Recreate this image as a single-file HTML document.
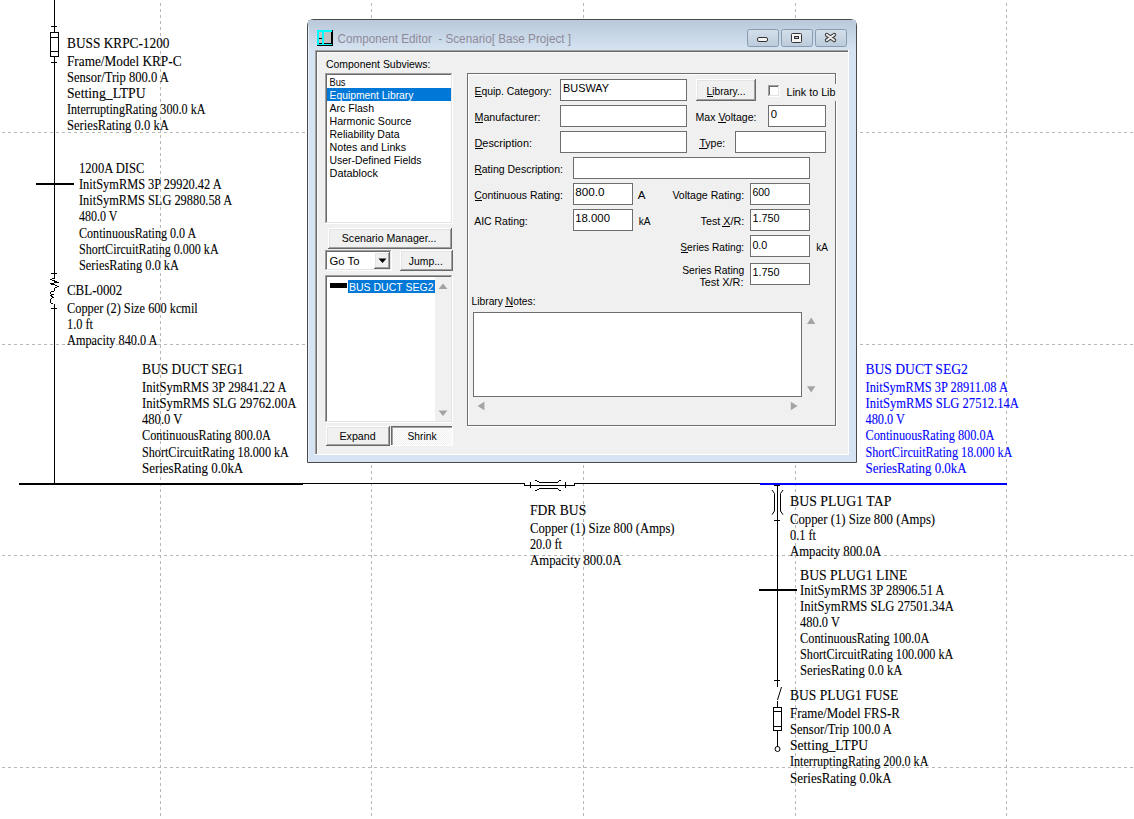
<!DOCTYPE html><html><head><meta charset="utf-8"><style>html,body{margin:0;padding:0;background:#fff;overflow:hidden}svg{position:absolute;left:0;top:0;display:block}</style></head><body>
<svg width="1134" height="819" viewBox="0 0 1134 819">
<rect width="1134" height="819" fill="#fff"/>
<g stroke="#b8b8b8" stroke-width="1" stroke-dasharray="3 3" shape-rendering="crispEdges">
<line x1="2" y1="132.5" x2="1134" y2="132.5"/>
<line x1="2" y1="344.5" x2="1134" y2="344.5"/>
<line x1="2" y1="555.5" x2="1134" y2="555.5"/>
<line x1="2" y1="767.5" x2="1134" y2="767.5"/>
<line x1="160.5" y1="3" x2="160.5" y2="819"/>
<line x1="371.5" y1="3" x2="371.5" y2="819"/>
<line x1="583.5" y1="3" x2="583.5" y2="819"/>
<line x1="795.5" y1="3" x2="795.5" y2="819"/>
<line x1="1006.5" y1="3" x2="1006.5" y2="819"/>
</g>
<g shape-rendering="crispEdges">
<rect x="54" y="0" width="1" height="33" fill="#000"/>
<rect x="50" y="32" width="9" height="1" fill="#000"/>
<rect x="50" y="56" width="9" height="1" fill="#000"/>
<rect x="50" y="32" width="1" height="25" fill="#000"/>
<rect x="58" y="32" width="1" height="25" fill="#000"/>
<rect x="50" y="37" width="9" height="1" fill="#000"/>
<rect x="50" y="51" width="9" height="1" fill="#000"/>
<rect x="51" y="26" width="6" height="1" fill="#000"/>
<rect x="54" y="56" width="1" height="218" fill="#000"/>
<rect x="51" y="62" width="6" height="1" fill="#000"/>
<rect x="36" y="183" width="38" height="2" fill="#000"/>
<rect x="51" y="273" width="6" height="1" fill="#000"/>
<rect x="51" y="308" width="6" height="1" fill="#000"/>
<rect x="54" y="273" width="1" height="6" fill="#000"/>
<rect x="54" y="304" width="1" height="181" fill="#000"/>
<rect x="52" y="278" width="3" height="1" fill="#000"/>
<rect x="50" y="279" width="2" height="1" fill="#000"/>
<rect x="52" y="280" width="3" height="1" fill="#000"/>
<rect x="54" y="281" width="3" height="1" fill="#000"/>
<rect x="54" y="282" width="5" height="1" fill="#000"/>
<rect x="50" y="283" width="4" height="1" fill="#000"/>
<rect x="51" y="284" width="4" height="1" fill="#000"/>
<rect x="55" y="285" width="2" height="1" fill="#000"/>
<rect x="57" y="286" width="2" height="1" fill="#000"/>
<rect x="55" y="287" width="2" height="1" fill="#000"/>
<rect x="54" y="288" width="1" height="1" fill="#000"/>
<rect x="54" y="289" width="1" height="1" fill="#000"/>
<rect x="54" y="290" width="1" height="1" fill="#000"/>
<rect x="51" y="291" width="3" height="1" fill="#000"/>
<rect x="50" y="292" width="1" height="1" fill="#000"/>
<rect x="50" y="293" width="1" height="1" fill="#000"/>
<rect x="51" y="294" width="3" height="1" fill="#000"/>
<rect x="50" y="295" width="2" height="1" fill="#000"/>
<rect x="51" y="296" width="2" height="1" fill="#000"/>
<rect x="52" y="297" width="2" height="1" fill="#000"/>
<rect x="51" y="298" width="1" height="1" fill="#000"/>
<rect x="50" y="299" width="1" height="1" fill="#000"/>
<rect x="50" y="300" width="1" height="1" fill="#000"/>
<rect x="50" y="301" width="1" height="1" fill="#000"/>
<rect x="50" y="302" width="1" height="1" fill="#000"/>
<rect x="51" y="303" width="2" height="1" fill="#000"/>
<rect x="19" y="483" width="284" height="2" fill="#000"/>
<rect x="302" y="483" width="223" height="1" fill="#000"/>
<rect x="524" y="483" width="1" height="3" fill="#000"/>
<rect x="524" y="485" width="51" height="1" fill="#000"/>
<rect x="574" y="483" width="1" height="3" fill="#000"/>
<rect x="574" y="483" width="187" height="1" fill="#000"/>
<rect x="530" y="482" width="1" height="1" fill="#000"/>
<rect x="530" y="482" width="1" height="6" fill="#000"/>
<rect x="565" y="482" width="1" height="6" fill="#000"/>
<rect x="539" y="482" width="19" height="1" fill="#000"/>
<rect x="539" y="488" width="19" height="1" fill="#000"/>
<rect x="537" y="481" width="2" height="1" fill="#000"/>
<rect x="535" y="480" width="2" height="1" fill="#000"/>
<rect x="558" y="481" width="1" height="1" fill="#000"/>
<rect x="559" y="480" width="2" height="1" fill="#000"/>
<rect x="537" y="489" width="2" height="1" fill="#000"/>
<rect x="535" y="490" width="2" height="1" fill="#000"/>
<rect x="558" y="489" width="1" height="1" fill="#000"/>
<rect x="559" y="490" width="2" height="1" fill="#000"/>
<rect x="760" y="483" width="247" height="2" fill="#0000ff"/>
<rect x="774" y="485" width="6" height="1" fill="#000"/>
<rect x="777" y="485" width="1" height="202" fill="#000"/>
<rect x="774" y="520" width="6" height="1" fill="#000"/>
<rect x="759" y="589" width="38" height="2" fill="#000"/>
<rect x="774" y="680" width="6" height="1" fill="#000"/>
</g>
<g fill="none" stroke="#000" stroke-width="1">
<polyline points="772,490 774.5,493.5 774.5,511 772,514.7"/>
<polyline points="783,490 780.5,493.5 780.5,511 783,514.7"/>
<line x1="777.5" y1="700" x2="781.5" y2="687"/>
<circle cx="777.5" cy="749" r="2.5"/>
</g>
<g shape-rendering="crispEdges">
<rect x="777" y="701" width="1" height="7" fill="#000"/>
<rect x="773" y="707" width="9" height="1" fill="#000"/>
<rect x="773" y="730" width="9" height="1" fill="#000"/>
<rect x="773" y="707" width="1" height="24" fill="#000"/>
<rect x="781" y="707" width="1" height="24" fill="#000"/>
<rect x="773" y="711" width="9" height="1" fill="#000"/>
<rect x="773" y="726" width="9" height="1" fill="#000"/>
<rect x="777" y="730" width="1" height="17" fill="#000"/>
</g>
<text x="67" y="48" font-family="Liberation Serif" font-size="13.8" fill="#000" stroke="#000" stroke-width="0.1" textLength="102.5" lengthAdjust="spacingAndGlyphs">BUSS KRPC-1200</text>
<text x="67" y="66" font-family="Liberation Serif" font-size="13.8" fill="#000" stroke="#000" stroke-width="0.1" textLength="114.5" lengthAdjust="spacingAndGlyphs">Frame/Model KRP-C</text>
<text x="67" y="82" font-family="Liberation Serif" font-size="13.8" fill="#000" stroke="#000" stroke-width="0.1" textLength="101.8" lengthAdjust="spacingAndGlyphs">Sensor/Trip 800.0 A</text>
<text x="67" y="98" font-family="Liberation Serif" font-size="13.8" fill="#000" stroke="#000" stroke-width="0.1" textLength="78.6" lengthAdjust="spacingAndGlyphs">Setting_LTPU</text>
<text x="67" y="114" font-family="Liberation Serif" font-size="13.8" fill="#000" stroke="#000" stroke-width="0.1" textLength="138.5" lengthAdjust="spacingAndGlyphs">InterruptingRating 300.0 kA</text>
<text x="67" y="130" font-family="Liberation Serif" font-size="13.8" fill="#000" stroke="#000" stroke-width="0.1" textLength="101.8" lengthAdjust="spacingAndGlyphs">SeriesRating 0.0 kA</text>
<text x="79" y="173" font-family="Liberation Serif" font-size="13.8" fill="#000" stroke="#000" stroke-width="0.1" textLength="65.4" lengthAdjust="spacingAndGlyphs">1200A DISC</text>
<text x="79" y="189" font-family="Liberation Serif" font-size="13.8" fill="#000" stroke="#000" stroke-width="0.1" textLength="142.6" lengthAdjust="spacingAndGlyphs">InitSymRMS 3P 29920.42 A</text>
<text x="79" y="205" font-family="Liberation Serif" font-size="13.8" fill="#000" stroke="#000" stroke-width="0.1" textLength="153.1" lengthAdjust="spacingAndGlyphs">InitSymRMS SLG 29880.58 A</text>
<text x="79" y="221" font-family="Liberation Serif" font-size="13.8" fill="#000" stroke="#000" stroke-width="0.1" textLength="38.4" lengthAdjust="spacingAndGlyphs">480.0 V</text>
<text x="79" y="238" font-family="Liberation Serif" font-size="13.8" fill="#000" stroke="#000" stroke-width="0.1" textLength="117.2" lengthAdjust="spacingAndGlyphs">ContinuousRating 0.0 A</text>
<text x="79" y="254" font-family="Liberation Serif" font-size="13.8" fill="#000" stroke="#000" stroke-width="0.1" textLength="139.6" lengthAdjust="spacingAndGlyphs">ShortCircuitRating 0.000 kA</text>
<text x="79" y="270" font-family="Liberation Serif" font-size="13.8" fill="#000" stroke="#000" stroke-width="0.1" textLength="99.9" lengthAdjust="spacingAndGlyphs">SeriesRating 0.0 kA</text>
<text x="67" y="295" font-family="Liberation Serif" font-size="13.8" fill="#000" stroke="#000" stroke-width="0.1" textLength="55.3" lengthAdjust="spacingAndGlyphs">CBL-0002</text>
<text x="67" y="313" font-family="Liberation Serif" font-size="13.8" fill="#000" stroke="#000" stroke-width="0.1" textLength="130.8" lengthAdjust="spacingAndGlyphs">Copper (2) Size 600 kcmil</text>
<text x="67" y="329" font-family="Liberation Serif" font-size="13.8" fill="#000" stroke="#000" stroke-width="0.1" textLength="25.9" lengthAdjust="spacingAndGlyphs">1.0 ft</text>
<text x="67" y="345" font-family="Liberation Serif" font-size="13.8" fill="#000" stroke="#000" stroke-width="0.1" textLength="90.5" lengthAdjust="spacingAndGlyphs">Ampacity 840.0 A</text>
<text x="142" y="374" font-family="Liberation Serif" font-size="13.8" fill="#000" stroke="#000" stroke-width="0.1" textLength="101.4" lengthAdjust="spacingAndGlyphs">BUS DUCT SEG1</text>
<text x="142" y="392" font-family="Liberation Serif" font-size="13.8" fill="#000" stroke="#000" stroke-width="0.1" textLength="144.6" lengthAdjust="spacingAndGlyphs">InitSymRMS 3P 29841.22 A</text>
<text x="142" y="408" font-family="Liberation Serif" font-size="13.8" fill="#000" stroke="#000" stroke-width="0.1" textLength="154.4" lengthAdjust="spacingAndGlyphs">InitSymRMS SLG 29762.00A</text>
<text x="142" y="424" font-family="Liberation Serif" font-size="13.8" fill="#000" stroke="#000" stroke-width="0.1" textLength="40.4" lengthAdjust="spacingAndGlyphs">480.0 V</text>
<text x="142" y="440" font-family="Liberation Serif" font-size="13.8" fill="#000" stroke="#000" stroke-width="0.1" textLength="128.9" lengthAdjust="spacingAndGlyphs">ContinuousRating 800.0A</text>
<text x="142" y="457" font-family="Liberation Serif" font-size="13.8" fill="#000" stroke="#000" stroke-width="0.1" textLength="146.9" lengthAdjust="spacingAndGlyphs">ShortCircuitRating 18.000 kA</text>
<text x="142" y="473" font-family="Liberation Serif" font-size="13.8" fill="#000" stroke="#000" stroke-width="0.1" textLength="101.2" lengthAdjust="spacingAndGlyphs">SeriesRating 0.0kA</text>
<text x="530" y="515" font-family="Liberation Serif" font-size="13.8" fill="#000" stroke="#000" stroke-width="0.1" textLength="56.2" lengthAdjust="spacingAndGlyphs">FDR BUS</text>
<text x="530" y="533" font-family="Liberation Serif" font-size="13.8" fill="#000" stroke="#000" stroke-width="0.1" textLength="144.6" lengthAdjust="spacingAndGlyphs">Copper (1) Size 800 (Amps)</text>
<text x="530" y="549" font-family="Liberation Serif" font-size="13.8" fill="#000" stroke="#000" stroke-width="0.1" textLength="31.9" lengthAdjust="spacingAndGlyphs">20.0 ft</text>
<text x="530" y="565" font-family="Liberation Serif" font-size="13.8" fill="#000" stroke="#000" stroke-width="0.1" textLength="91.4" lengthAdjust="spacingAndGlyphs">Ampacity 800.0A</text>
<text x="790" y="506" font-family="Liberation Serif" font-size="13.8" fill="#000" stroke="#000" stroke-width="0.1" textLength="101.3" lengthAdjust="spacingAndGlyphs">BUS PLUG1 TAP</text>
<text x="790" y="524" font-family="Liberation Serif" font-size="13.8" fill="#000" stroke="#000" stroke-width="0.1" textLength="145.1" lengthAdjust="spacingAndGlyphs">Copper (1) Size 800 (Amps)</text>
<text x="790" y="540" font-family="Liberation Serif" font-size="13.8" fill="#000" stroke="#000" stroke-width="0.1" textLength="25.9" lengthAdjust="spacingAndGlyphs">0.1 ft</text>
<text x="790" y="556" font-family="Liberation Serif" font-size="13.8" fill="#000" stroke="#000" stroke-width="0.1" textLength="91.2" lengthAdjust="spacingAndGlyphs">Ampacity 800.0A</text>
<text x="800" y="580" font-family="Liberation Serif" font-size="13.8" fill="#000" stroke="#000" stroke-width="0.1" textLength="107.3" lengthAdjust="spacingAndGlyphs">BUS PLUG1 LINE</text>
<text x="800" y="595" font-family="Liberation Serif" font-size="13.8" fill="#000" stroke="#000" stroke-width="0.1" textLength="144.4" lengthAdjust="spacingAndGlyphs">InitSymRMS 3P 28906.51 A</text>
<text x="800" y="611" font-family="Liberation Serif" font-size="13.8" fill="#000" stroke="#000" stroke-width="0.1" textLength="153.8" lengthAdjust="spacingAndGlyphs">InitSymRMS SLG 27501.34A</text>
<text x="800" y="627" font-family="Liberation Serif" font-size="13.8" fill="#000" stroke="#000" stroke-width="0.1" textLength="39.9" lengthAdjust="spacingAndGlyphs">480.0 V</text>
<text x="800" y="643" font-family="Liberation Serif" font-size="13.8" fill="#000" stroke="#000" stroke-width="0.1" textLength="129.4" lengthAdjust="spacingAndGlyphs">ContinuousRating 100.0A</text>
<text x="800" y="659" font-family="Liberation Serif" font-size="13.8" fill="#000" stroke="#000" stroke-width="0.1" textLength="153.4" lengthAdjust="spacingAndGlyphs">ShortCircuitRating 100.000 kA</text>
<text x="800" y="675" font-family="Liberation Serif" font-size="13.8" fill="#000" stroke="#000" stroke-width="0.1" textLength="102.4" lengthAdjust="spacingAndGlyphs">SeriesRating 0.0 kA</text>
<text x="790" y="700" font-family="Liberation Serif" font-size="13.8" fill="#000" stroke="#000" stroke-width="0.1" textLength="108.4" lengthAdjust="spacingAndGlyphs">BUS PLUG1 FUSE</text>
<text x="790" y="718" font-family="Liberation Serif" font-size="13.8" fill="#000" stroke="#000" stroke-width="0.1" textLength="109.9" lengthAdjust="spacingAndGlyphs">Frame/Model FRS-R</text>
<text x="790" y="734" font-family="Liberation Serif" font-size="13.8" fill="#000" stroke="#000" stroke-width="0.1" textLength="101.9" lengthAdjust="spacingAndGlyphs">Sensor/Trip 100.0 A</text>
<text x="790" y="750" font-family="Liberation Serif" font-size="13.8" fill="#000" stroke="#000" stroke-width="0.1" textLength="78.0" lengthAdjust="spacingAndGlyphs">Setting_LTPU</text>
<text x="790" y="766" font-family="Liberation Serif" font-size="13.8" fill="#000" stroke="#000" stroke-width="0.1" textLength="138.4" lengthAdjust="spacingAndGlyphs">InterruptingRating 200.0 kA</text>
<text x="790" y="783" font-family="Liberation Serif" font-size="13.8" fill="#000" stroke="#000" stroke-width="0.1" textLength="101.6" lengthAdjust="spacingAndGlyphs">SeriesRating 0.0kA</text>
<text x="865.5" y="374" font-family="Liberation Serif" font-size="13.8" fill="#0000ff" stroke="#0000ff" stroke-width="0.1" textLength="102.3" lengthAdjust="spacingAndGlyphs">BUS DUCT SEG2</text>
<text x="865.5" y="392" font-family="Liberation Serif" font-size="13.8" fill="#0000ff" stroke="#0000ff" stroke-width="0.1" textLength="142.4" lengthAdjust="spacingAndGlyphs">InitSymRMS 3P 28911.08 A</text>
<text x="865.5" y="408" font-family="Liberation Serif" font-size="13.8" fill="#0000ff" stroke="#0000ff" stroke-width="0.1" textLength="153.3" lengthAdjust="spacingAndGlyphs">InitSymRMS SLG 27512.14A</text>
<text x="865.5" y="424" font-family="Liberation Serif" font-size="13.8" fill="#0000ff" stroke="#0000ff" stroke-width="0.1" textLength="39.4" lengthAdjust="spacingAndGlyphs">480.0 V</text>
<text x="865.5" y="440" font-family="Liberation Serif" font-size="13.8" fill="#0000ff" stroke="#0000ff" stroke-width="0.1" textLength="128.9" lengthAdjust="spacingAndGlyphs">ContinuousRating 800.0A</text>
<text x="865.5" y="457" font-family="Liberation Serif" font-size="13.8" fill="#0000ff" stroke="#0000ff" stroke-width="0.1" textLength="146.9" lengthAdjust="spacingAndGlyphs">ShortCircuitRating 18.000 kA</text>
<text x="865.5" y="473" font-family="Liberation Serif" font-size="13.8" fill="#0000ff" stroke="#0000ff" stroke-width="0.1" textLength="101.1" lengthAdjust="spacingAndGlyphs">SeriesRating 0.0kA</text>
<defs><linearGradient id="tb" x1="0" y1="0" x2="0" y2="1"><stop offset="0" stop-color="#b9c9da"/><stop offset="1" stop-color="#d5e3f1"/></linearGradient><linearGradient id="btn" x1="0" y1="0" x2="0" y2="1"><stop offset="0" stop-color="#d4dfea"/><stop offset="1" stop-color="#bccbdb"/></linearGradient><pattern id="dith" width="2" height="2" patternUnits="userSpaceOnUse"><rect width="2" height="2" fill="#fff"/><rect width="1" height="1" fill="#f0f0f0"/><rect x="1" y="1" width="1" height="1" fill="#f0f0f0"/></pattern></defs>
<path d="M307.5,462.5 V26 Q307.5,19.5 314,19.5 H850 Q856.5,19.5 856.5,26 V462.5 Z" fill="#d5e3f2" stroke="#4a4a4a" stroke-width="1"/>
<rect x="308" y="20" width="548" height="30" fill="url(#tb)"/>
<g shape-rendering="crispEdges">
<rect x="308" y="26" width="1" height="436" fill="#e8f0f9"/>
<rect x="317" y="30" width="15" height="15" fill="#00ffff"/>
<rect x="319" y="32" width="3" height="6" fill="#c0c0c0"/>
<rect x="319" y="38" width="3" height="1" fill="#000"/>
<rect x="319" y="39" width="3" height="4" fill="#c0c0c0"/>
<rect x="319" y="43" width="3" height="1" fill="#000"/>
<rect x="324" y="32" width="7" height="11" fill="#c0c0c0"/>
<rect x="331" y="32" width="1" height="12" fill="#000"/>
<rect x="324" y="43" width="8" height="1" fill="#000"/>
<rect x="332" y="30" width="1" height="16" fill="#000"/>
<rect x="317" y="45" width="16" height="1" fill="#000"/>
</g>
<text x="337.5" y="42.5" font-family="Liberation Sans" font-size="12" fill="#8e8a9a" textLength="233.5" lengthAdjust="spacingAndGlyphs">Component Editor &#160;- Scenario[ Base Project ]</text>
<rect x="747.5" y="29.5" width="31" height="17" rx="2" fill="url(#btn)" stroke="#8a9ab0"/>
<rect x="781.5" y="29.5" width="31" height="17" rx="2" fill="url(#btn)" stroke="#8a9ab0"/>
<rect x="815.5" y="29.5" width="31" height="17" rx="2" fill="url(#btn)" stroke="#8a9ab0"/>
<rect x="757.5" y="37.5" width="10" height="4" rx="1.5" fill="#f4f4f4" stroke="#333"/>
<rect x="791.5" y="33.5" width="10" height="9" rx="1" fill="#f4f4f4" stroke="#333"/><rect x="794.5" y="36.5" width="4" height="2" fill="#b8c6d6" stroke="#333"/>
<path d="M826.8,34.8 L834.2,40.2 M834.2,34.8 L826.8,40.2" stroke="#3a3a3a" stroke-width="4" stroke-linecap="round"/><path d="M826.8,34.8 L834.2,40.2 M834.2,34.8 L826.8,40.2" stroke="#ececec" stroke-width="2" stroke-linecap="round"/>
<g shape-rendering="crispEdges">
<rect x="315" y="50" width="534" height="405" fill="#f0f0f0"/>
<rect x="315" y="50" width="534" height="1" fill="#a0a0a0"/>
<rect x="315" y="50" width="1" height="405" fill="#a0a0a0"/>
<rect x="316" y="51" width="532" height="1" fill="#696969"/>
<rect x="316" y="51" width="1" height="403" fill="#696969"/>
<rect x="315" y="454" width="534" height="1" fill="#ffffff"/>
<rect x="848" y="50" width="1" height="405" fill="#ffffff"/>
<rect x="317" y="52" width="531" height="1" fill="#fafafa"/>
<rect x="317" y="52" width="1" height="402" fill="#fafafa"/>
</g>
<text x="326" y="68" font-family="Liberation Sans" font-size="11" fill="#000" textLength="104.5" lengthAdjust="spacingAndGlyphs">Component Subviews:</text>
<g shape-rendering="crispEdges">
<rect x="325" y="73" width="128" height="151" fill="#fff"/>
<rect x="325" y="73" width="128" height="1" fill="#a0a0a0"/>
<rect x="325" y="73" width="1" height="151" fill="#a0a0a0"/>
<rect x="325" y="223" width="128" height="1" fill="#ffffff"/>
<rect x="452" y="73" width="1" height="151" fill="#ffffff"/>
<rect x="326" y="74" width="126" height="1" fill="#696969"/>
<rect x="326" y="74" width="1" height="149" fill="#696969"/>
<rect x="326" y="222" width="126" height="1" fill="#e3e3e3"/>
<rect x="451" y="74" width="1" height="149" fill="#e3e3e3"/>
<rect x="327" y="88" width="124" height="13" fill="#0078d7"/>
</g>
<text x="329.5" y="85.5" font-family="Liberation Sans" font-size="11" fill="#000" textLength="16.0" lengthAdjust="spacingAndGlyphs">Bus</text>
<text x="329.5" y="98.5" font-family="Liberation Sans" font-size="11" fill="#fff" textLength="84.0" lengthAdjust="spacingAndGlyphs">Equipment Library</text>
<text x="329.5" y="111.5" font-family="Liberation Sans" font-size="11" fill="#000" textLength="44.5" lengthAdjust="spacingAndGlyphs">Arc Flash</text>
<text x="329.5" y="124.5" font-family="Liberation Sans" font-size="11" fill="#000" textLength="82.0" lengthAdjust="spacingAndGlyphs">Harmonic Source</text>
<text x="329.5" y="137.5" font-family="Liberation Sans" font-size="11" fill="#000" textLength="70.0" lengthAdjust="spacingAndGlyphs">Reliability Data</text>
<text x="329.5" y="150.5" font-family="Liberation Sans" font-size="11" fill="#000" textLength="76.5" lengthAdjust="spacingAndGlyphs">Notes and Links</text>
<text x="329.5" y="163.5" font-family="Liberation Sans" font-size="11" fill="#000" textLength="92.0" lengthAdjust="spacingAndGlyphs">User-Defined Fields</text>
<text x="329.5" y="176.5" font-family="Liberation Sans" font-size="11" fill="#000" textLength="48.5" lengthAdjust="spacingAndGlyphs">Datablock</text>
<g shape-rendering="crispEdges">
<rect x="328" y="228" width="124" height="21" fill="#f0f0f0"/>
<rect x="328" y="228" width="124" height="1" fill="#ffffff"/>
<rect x="328" y="228" width="1" height="21" fill="#ffffff"/>
<rect x="328" y="248" width="124" height="1" fill="#696969"/>
<rect x="451" y="228" width="1" height="21" fill="#696969"/>
<rect x="329" y="229" width="122" height="1" fill="#e3e3e3"/>
<rect x="329" y="229" width="1" height="19" fill="#e3e3e3"/>
<rect x="329" y="247" width="122" height="1" fill="#a0a0a0"/>
<rect x="450" y="229" width="1" height="19" fill="#a0a0a0"/>
</g>
<text x="341.8" y="241.7" font-family="Liberation Sans" font-size="11" fill="#000" textLength="94.7" lengthAdjust="spacingAndGlyphs">Scenario Manager...</text>
<g shape-rendering="crispEdges">
<rect x="325" y="250" width="67" height="21" fill="#fff"/>
<rect x="325" y="250" width="67" height="1" fill="#a0a0a0"/>
<rect x="325" y="250" width="1" height="21" fill="#a0a0a0"/>
<rect x="325" y="270" width="67" height="1" fill="#ffffff"/>
<rect x="391" y="250" width="1" height="21" fill="#ffffff"/>
<rect x="326" y="251" width="65" height="1" fill="#696969"/>
<rect x="326" y="251" width="1" height="19" fill="#696969"/>
<rect x="326" y="269" width="65" height="1" fill="#e3e3e3"/>
<rect x="390" y="251" width="1" height="19" fill="#e3e3e3"/>
<rect x="374" y="252" width="16" height="17" fill="#f0f0f0"/>
<rect x="374" y="252" width="16" height="1" fill="#ffffff"/>
<rect x="374" y="252" width="1" height="17" fill="#ffffff"/>
<rect x="374" y="268" width="16" height="1" fill="#696969"/>
<rect x="389" y="252" width="1" height="17" fill="#696969"/>
<rect x="375" y="253" width="14" height="1" fill="#e3e3e3"/>
<rect x="375" y="253" width="1" height="15" fill="#e3e3e3"/>
<rect x="375" y="267" width="14" height="1" fill="#a0a0a0"/>
<rect x="388" y="253" width="1" height="15" fill="#a0a0a0"/>
</g>
<path d="M378.5,258.5 H386.5 L382.5,263 Z" fill="#000"/>
<text x="329.5" y="264.8" font-family="Liberation Sans" font-size="11" fill="#000" textLength="30.0" lengthAdjust="spacingAndGlyphs">Go To</text>
<g shape-rendering="crispEdges">
<rect x="400" y="250" width="53" height="21" fill="#f0f0f0"/>
<rect x="400" y="250" width="53" height="1" fill="#ffffff"/>
<rect x="400" y="250" width="1" height="21" fill="#ffffff"/>
<rect x="400" y="270" width="53" height="1" fill="#696969"/>
<rect x="452" y="250" width="1" height="21" fill="#696969"/>
<rect x="401" y="251" width="51" height="1" fill="#e3e3e3"/>
<rect x="401" y="251" width="1" height="19" fill="#e3e3e3"/>
<rect x="401" y="269" width="51" height="1" fill="#a0a0a0"/>
<rect x="451" y="251" width="1" height="19" fill="#a0a0a0"/>
</g>
<text x="408.8" y="264.8" font-family="Liberation Sans" font-size="11" fill="#000" textLength="34.0" lengthAdjust="spacingAndGlyphs">Jump...</text>
<g shape-rendering="crispEdges">
<rect x="325" y="275" width="128" height="148" fill="#fff"/>
<rect x="325" y="275" width="128" height="1" fill="#a0a0a0"/>
<rect x="325" y="275" width="1" height="148" fill="#a0a0a0"/>
<rect x="325" y="422" width="128" height="1" fill="#ffffff"/>
<rect x="452" y="275" width="1" height="148" fill="#ffffff"/>
<rect x="326" y="276" width="126" height="1" fill="#696969"/>
<rect x="326" y="276" width="1" height="146" fill="#696969"/>
<rect x="326" y="421" width="126" height="1" fill="#e3e3e3"/>
<rect x="451" y="276" width="1" height="146" fill="#e3e3e3"/>
<rect x="435" y="277" width="16" height="144" fill="#f0f0f0"/>
<rect x="330" y="283" width="17" height="5" fill="#000"/>
<rect x="348" y="280" width="87" height="13" fill="#0078d7"/>
</g>
<text x="349" y="290.5" font-family="Liberation Sans" font-size="11" fill="#fff" textLength="84.5" lengthAdjust="spacingAndGlyphs">BUS DUCT SEG2</text>
<path d="M438.5,289 L443,283.5 L447.5,289 Z" fill="#a3a3a3"/><path d="M438.5,410.5 L443,416 L447.5,410.5 Z" fill="#a3a3a3"/>
<g shape-rendering="crispEdges">
<rect x="326" y="426" width="64" height="20" fill="#f0f0f0"/>
<rect x="326" y="426" width="64" height="1" fill="#ffffff"/>
<rect x="326" y="426" width="1" height="20" fill="#ffffff"/>
<rect x="326" y="445" width="64" height="1" fill="#696969"/>
<rect x="389" y="426" width="1" height="20" fill="#696969"/>
<rect x="327" y="427" width="62" height="1" fill="#e3e3e3"/>
<rect x="327" y="427" width="1" height="18" fill="#e3e3e3"/>
<rect x="327" y="444" width="62" height="1" fill="#a0a0a0"/>
<rect x="388" y="427" width="1" height="18" fill="#a0a0a0"/>
</g>
<text x="339.5" y="439.5" font-family="Liberation Sans" font-size="11" fill="#000" textLength="36.1" lengthAdjust="spacingAndGlyphs">Expand</text>
<g shape-rendering="crispEdges">
<rect x="391" y="426" width="62" height="20" fill="url(#dith)"/>
<rect x="391" y="426" width="62" height="1" fill="#696969"/>
<rect x="391" y="426" width="1" height="20" fill="#696969"/>
<rect x="392" y="427" width="60" height="1" fill="#a0a0a0"/>
<rect x="392" y="427" width="1" height="18" fill="#a0a0a0"/>
<rect x="391" y="445" width="62" height="1" fill="#ffffff"/>
<rect x="452" y="426" width="1" height="20" fill="#ffffff"/>
</g>
<text x="407.5" y="439.5" font-family="Liberation Sans" font-size="11" fill="#000" textLength="29.0" lengthAdjust="spacingAndGlyphs">Shrink</text>
<g shape-rendering="crispEdges">
<rect x="467" y="73" width="369" height="1" fill="#6e6e6e"/>
<rect x="468" y="74" width="369" height="1" fill="#ffffff"/>
<rect x="467" y="73" width="1" height="353" fill="#6e6e6e"/>
<rect x="468" y="74" width="1" height="351" fill="#ffffff"/>
<rect x="467" y="425" width="369" height="1" fill="#6e6e6e"/>
<rect x="467" y="426" width="370" height="1" fill="#ffffff"/>
<rect x="835" y="73" width="1" height="353" fill="#6e6e6e"/>
<rect x="836" y="73" width="1" height="354" fill="#ffffff"/>
<rect x="784" y="84" width="57" height="17" fill="#f0f0f0"/>
</g>
<text x="474.5" y="95.3" font-family="Liberation Sans" font-size="11" fill="#000" textLength="77.0" lengthAdjust="spacingAndGlyphs">Equip. Category:</text>
<rect x="475" y="96" width="7" height="1" fill="#000" shape-rendering="crispEdges"/>
<g shape-rendering="crispEdges">
<rect x="560" y="79" width="127" height="22" fill="#fff"/>
<rect x="560" y="79" width="127" height="1" fill="#6e6e6e"/>
<rect x="560" y="100" width="127" height="1" fill="#6e6e6e"/>
<rect x="560" y="79" width="1" height="22" fill="#6e6e6e"/>
<rect x="686" y="79" width="1" height="22" fill="#6e6e6e"/>
<rect x="696" y="79" width="60" height="22" fill="#f0f0f0"/>
<rect x="696" y="79" width="60" height="1" fill="#ffffff"/>
<rect x="696" y="79" width="1" height="22" fill="#ffffff"/>
<rect x="696" y="100" width="60" height="1" fill="#696969"/>
<rect x="755" y="79" width="1" height="22" fill="#696969"/>
<rect x="697" y="80" width="58" height="1" fill="#e3e3e3"/>
<rect x="697" y="80" width="1" height="20" fill="#e3e3e3"/>
<rect x="697" y="99" width="58" height="1" fill="#a0a0a0"/>
<rect x="754" y="80" width="1" height="20" fill="#a0a0a0"/>
<rect x="768" y="85" width="12" height="12" fill="#fff"/>
<rect x="768" y="85" width="12" height="1" fill="#a0a0a0"/>
<rect x="768" y="85" width="1" height="12" fill="#a0a0a0"/>
<rect x="768" y="96" width="12" height="1" fill="#ffffff"/>
<rect x="779" y="85" width="1" height="12" fill="#ffffff"/>
<rect x="769" y="86" width="10" height="1" fill="#696969"/>
<rect x="769" y="86" width="1" height="10" fill="#696969"/>
<rect x="769" y="95" width="10" height="1" fill="#e3e3e3"/>
<rect x="778" y="86" width="1" height="10" fill="#e3e3e3"/>
<rect x="560" y="105" width="127" height="22" fill="#fff"/>
<rect x="560" y="105" width="127" height="1" fill="#6e6e6e"/>
<rect x="560" y="126" width="127" height="1" fill="#6e6e6e"/>
<rect x="560" y="105" width="1" height="22" fill="#6e6e6e"/>
<rect x="686" y="105" width="1" height="22" fill="#6e6e6e"/>
<rect x="768" y="105" width="58" height="22" fill="#fff"/>
<rect x="768" y="105" width="58" height="1" fill="#6e6e6e"/>
<rect x="768" y="126" width="58" height="1" fill="#6e6e6e"/>
<rect x="768" y="105" width="1" height="22" fill="#6e6e6e"/>
<rect x="825" y="105" width="1" height="22" fill="#6e6e6e"/>
<rect x="560" y="131" width="127" height="22" fill="#fff"/>
<rect x="560" y="131" width="127" height="1" fill="#6e6e6e"/>
<rect x="560" y="152" width="127" height="1" fill="#6e6e6e"/>
<rect x="560" y="131" width="1" height="22" fill="#6e6e6e"/>
<rect x="686" y="131" width="1" height="22" fill="#6e6e6e"/>
<rect x="735" y="131" width="91" height="22" fill="#fff"/>
<rect x="735" y="131" width="91" height="1" fill="#6e6e6e"/>
<rect x="735" y="152" width="91" height="1" fill="#6e6e6e"/>
<rect x="735" y="131" width="1" height="22" fill="#6e6e6e"/>
<rect x="825" y="131" width="1" height="22" fill="#6e6e6e"/>
<rect x="573" y="157" width="237" height="22" fill="#fff"/>
<rect x="573" y="157" width="237" height="1" fill="#6e6e6e"/>
<rect x="573" y="178" width="237" height="1" fill="#6e6e6e"/>
<rect x="573" y="157" width="1" height="22" fill="#6e6e6e"/>
<rect x="809" y="157" width="1" height="22" fill="#6e6e6e"/>
<rect x="573" y="183" width="60" height="22" fill="#fff"/>
<rect x="573" y="183" width="60" height="1" fill="#6e6e6e"/>
<rect x="573" y="204" width="60" height="1" fill="#6e6e6e"/>
<rect x="573" y="183" width="1" height="22" fill="#6e6e6e"/>
<rect x="632" y="183" width="1" height="22" fill="#6e6e6e"/>
<rect x="750" y="183" width="60" height="22" fill="#fff"/>
<rect x="750" y="183" width="60" height="1" fill="#6e6e6e"/>
<rect x="750" y="204" width="60" height="1" fill="#6e6e6e"/>
<rect x="750" y="183" width="1" height="22" fill="#6e6e6e"/>
<rect x="809" y="183" width="1" height="22" fill="#6e6e6e"/>
<rect x="573" y="209" width="60" height="22" fill="#fff"/>
<rect x="573" y="209" width="60" height="1" fill="#6e6e6e"/>
<rect x="573" y="230" width="60" height="1" fill="#6e6e6e"/>
<rect x="573" y="209" width="1" height="22" fill="#6e6e6e"/>
<rect x="632" y="209" width="1" height="22" fill="#6e6e6e"/>
<rect x="750" y="209" width="60" height="22" fill="#fff"/>
<rect x="750" y="209" width="60" height="1" fill="#6e6e6e"/>
<rect x="750" y="230" width="60" height="1" fill="#6e6e6e"/>
<rect x="750" y="209" width="1" height="22" fill="#6e6e6e"/>
<rect x="809" y="209" width="1" height="22" fill="#6e6e6e"/>
<rect x="750" y="235" width="60" height="22" fill="#fff"/>
<rect x="750" y="235" width="60" height="1" fill="#6e6e6e"/>
<rect x="750" y="256" width="60" height="1" fill="#6e6e6e"/>
<rect x="750" y="235" width="1" height="22" fill="#6e6e6e"/>
<rect x="809" y="235" width="1" height="22" fill="#6e6e6e"/>
<rect x="750" y="263" width="60" height="22" fill="#fff"/>
<rect x="750" y="263" width="60" height="1" fill="#6e6e6e"/>
<rect x="750" y="284" width="60" height="1" fill="#6e6e6e"/>
<rect x="750" y="263" width="1" height="22" fill="#6e6e6e"/>
<rect x="809" y="263" width="1" height="22" fill="#6e6e6e"/>
<rect x="473" y="312" width="329" height="85" fill="#fff"/>
<rect x="473" y="312" width="329" height="1" fill="#6e6e6e"/>
<rect x="473" y="396" width="329" height="1" fill="#6e6e6e"/>
<rect x="473" y="312" width="1" height="85" fill="#6e6e6e"/>
<rect x="801" y="312" width="1" height="85" fill="#6e6e6e"/>
</g>
<text x="563" y="91.9" font-family="Liberation Sans" font-size="11" fill="#000" textLength="46.0" lengthAdjust="spacingAndGlyphs">BUSWAY</text>
<text x="706.5" y="95.1" font-family="Liberation Sans" font-size="11" fill="#000" textLength="39.0" lengthAdjust="spacingAndGlyphs">Library...</text>
<rect x="707" y="96" width="6" height="1" fill="#000" shape-rendering="crispEdges"/>
<text x="786.5" y="95.8" font-family="Liberation Sans" font-size="11" fill="#000" textLength="49.0" lengthAdjust="spacingAndGlyphs">Link to Lib</text>
<text x="474.5" y="121" font-family="Liberation Sans" font-size="11" fill="#000" textLength="66.0" lengthAdjust="spacingAndGlyphs">Manufacturer:</text>
<rect x="475" y="122" width="8" height="1" fill="#000" shape-rendering="crispEdges"/>
<text x="695.6" y="121" font-family="Liberation Sans" font-size="11" fill="#000" textLength="60.9" lengthAdjust="spacingAndGlyphs">Max Voltage:</text>
<rect x="718" y="122" width="8" height="1" fill="#000" shape-rendering="crispEdges"/>
<text x="770.7" y="118" font-family="Liberation Sans" font-size="11" fill="#000" textLength="6.3" lengthAdjust="spacingAndGlyphs">0</text>
<text x="474.5" y="147.1" font-family="Liberation Sans" font-size="11" fill="#000" textLength="57.5" lengthAdjust="spacingAndGlyphs">Description:</text>
<rect x="475" y="148" width="8" height="1" fill="#000" shape-rendering="crispEdges"/>
<text x="699.4" y="146.9" font-family="Liberation Sans" font-size="11" fill="#000" textLength="25.9" lengthAdjust="spacingAndGlyphs">Type:</text>
<rect x="699" y="148" width="8" height="1" fill="#000" shape-rendering="crispEdges"/>
<text x="474.2" y="172.9" font-family="Liberation Sans" font-size="11" fill="#000" textLength="88.8" lengthAdjust="spacingAndGlyphs">Rating Description:</text>
<rect x="475" y="174" width="7" height="1" fill="#000" shape-rendering="crispEdges"/>
<text x="474.2" y="198.5" font-family="Liberation Sans" font-size="11" fill="#000" textLength="88.8" lengthAdjust="spacingAndGlyphs">Continuous Rating:</text>
<rect x="475" y="200" width="7" height="1" fill="#000" shape-rendering="crispEdges"/>
<text x="575.2" y="196" font-family="Liberation Sans" font-size="11" fill="#000" textLength="29.3" lengthAdjust="spacingAndGlyphs">800.0</text>
<text x="637.8" y="198.5" font-family="Liberation Sans" font-size="11" fill="#000" textLength="7.7" lengthAdjust="spacingAndGlyphs">A</text>
<text x="474.2" y="225" font-family="Liberation Sans" font-size="11" fill="#000" textLength="53.5" lengthAdjust="spacingAndGlyphs">AIC Rating:</text>
<text x="575.2" y="222.2" font-family="Liberation Sans" font-size="11" fill="#000" textLength="34.8" lengthAdjust="spacingAndGlyphs">18.000</text>
<text x="638.7" y="225" font-family="Liberation Sans" font-size="11" fill="#000" textLength="11.8" lengthAdjust="spacingAndGlyphs">kA</text>
<text x="672.4" y="198.8" font-family="Liberation Sans" font-size="11" fill="#000" textLength="71.8" lengthAdjust="spacingAndGlyphs">Voltage Rating:</text>
<text x="752.4" y="196" font-family="Liberation Sans" font-size="11" fill="#000" textLength="17.6" lengthAdjust="spacingAndGlyphs">600</text>
<text x="700.5" y="225" font-family="Liberation Sans" font-size="11" fill="#000" textLength="43.7" lengthAdjust="spacingAndGlyphs">Test X/R:</text>
<rect x="722" y="226" width="8" height="1" fill="#000" shape-rendering="crispEdges"/>
<text x="752.4" y="222.2" font-family="Liberation Sans" font-size="11" fill="#000" textLength="27.1" lengthAdjust="spacingAndGlyphs">1.750</text>
<text x="680.3" y="251.2" font-family="Liberation Sans" font-size="11" fill="#000" textLength="63.9" lengthAdjust="spacingAndGlyphs">Series Rating:</text>
<rect x="681" y="252" width="7" height="1" fill="#000" shape-rendering="crispEdges"/>
<text x="752.4" y="248.5" font-family="Liberation Sans" font-size="11" fill="#000" textLength="14.9" lengthAdjust="spacingAndGlyphs">0.0</text>
<text x="816.3" y="251.2" font-family="Liberation Sans" font-size="11" fill="#000" textLength="11.7" lengthAdjust="spacingAndGlyphs">kA</text>
<text x="682.2" y="273.7" font-family="Liberation Sans" font-size="11" fill="#000" textLength="62.0" lengthAdjust="spacingAndGlyphs">Series Rating</text>
<text x="699.4" y="286.1" font-family="Liberation Sans" font-size="11" fill="#000" textLength="44.1" lengthAdjust="spacingAndGlyphs">Test X/R:</text>
<text x="752.4" y="276.2" font-family="Liberation Sans" font-size="11" fill="#000" textLength="27.1" lengthAdjust="spacingAndGlyphs">1.750</text>
<text x="471.5" y="304.8" font-family="Liberation Sans" font-size="11" fill="#000" textLength="64.0" lengthAdjust="spacingAndGlyphs">Library Notes:</text>
<rect x="505" y="306" width="8" height="1" fill="#000" shape-rendering="crispEdges"/>
<path d="M807,323.9 L811.2,317.6 L815.3,323.9 Z" fill="#a3a3a3"/><path d="M807,386.2 L811.2,392.4 L815.3,386.2 Z" fill="#a3a3a3"/>
<path d="M484.4,401.7 L477.6,406 L484.4,410.2 Z" fill="#a3a3a3"/><path d="M790.8,401.7 L797.6,406 L790.8,410.2 Z" fill="#a3a3a3"/>
</svg></body></html>
